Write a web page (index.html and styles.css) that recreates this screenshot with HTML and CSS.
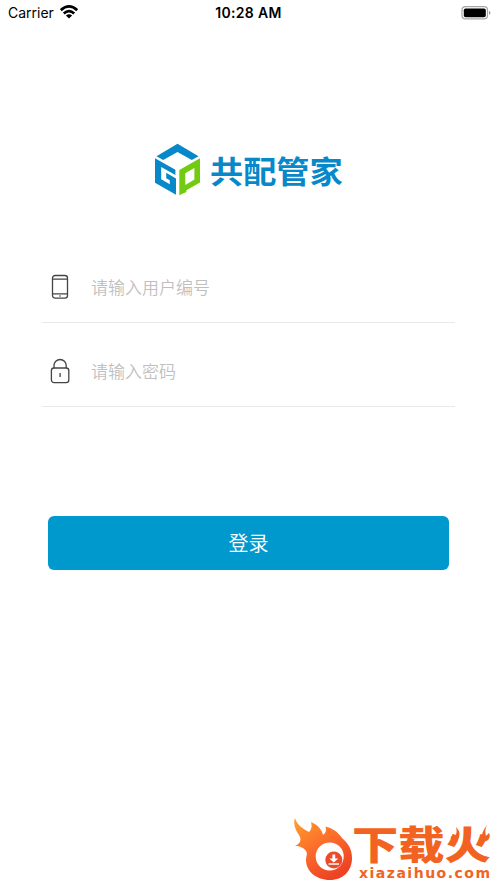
FILE: index.html
```html
<!DOCTYPE html>
<html lang="zh-CN">
<head>
<meta charset="utf-8">
<title>共配管家</title>
<link rel="stylesheet" href="styles.css">
</head>
<body>
<header class="status">
  <div class="carrier">
    <span>Carrier</span>
    <svg width="18" height="14" viewBox="0 0 18 14" fill="none" stroke="#000" stroke-width="2.7"><path d="M.8 5.2Q9-2.3 17.2 5.2M3.8 8.5Q9 3.9 14.2 8.5"/><path d="M5.9 10.6Q9 8 12.1 10.6L9 13.6Z" fill="#000" stroke="none"/></svg>
  </div>
  <time class="clock">10:28 AM</time>
  <div class="power">
    <svg width="30" height="14" viewBox="0 0 30 14"><rect x="1" y=".7" width="25.5" height="12.2" rx="3.4" fill="#fff" stroke="#a6a6a6" stroke-width="1.2"/><rect x="2.8" y="2.4" width="22" height="8.8" rx="1.8"/><path d="M28 4.7Q31 6.8 28 8.9Z" fill="#999"/></svg>
  </div>
</header>
<main class="login">
  <div class="brand">
    <svg class="cube" width="48" height="54" viewBox="0 0 48 54">
      <path d="M2.5 13.2 23.5 .8 44.5 13.2 37.8 17.1 23.5 8.9 9.2 17.1Z" fill="#0788c8"/>
      <path d="M1 15.3 21.4 26.8V32L7.2 24V36.2L15.8 41.2V37.3L12.2 35.2V29.8L22 35.4V51.8L1 39.7Z" fill="#0788c8"/>
      <path fill-rule="evenodd" d="M46 15.3V39.4L32.4 47.3V49.1L25.3 52.2V27.1ZM40.4 25 31.3 30.2V42L40.4 36.5Z" fill="#73cb11"/>
    </svg>
    <h1 class="name">共配管家</h1>
  </div>
  <form class="form">
    <label class="field">
      <svg width="20" height="26" viewBox="0 0 20 26" fill="none" stroke="#444" stroke-width="1.3"><rect x="2.5" y="1.5" width="15" height="22.6" rx="2.6"/><path d="M2.5 5.1H17.5M2.5 19.8H17.5"/><circle cx="10" cy="22" r=".8" fill="#444" stroke="none"/></svg>
      <input type="text" placeholder="请输入用户编号">
    </label>
    <label class="field">
      <svg width="20" height="26" viewBox="0 0 20 26" fill="none" stroke="#444" stroke-width="1.3"><rect x="1.4" y="10" width="17.4" height="14.6" rx="2.6"/><path d="M4 10V7.6A6.1 6.1 0 0 1 16.2 7.6V10M10.1 15V19"/></svg>
      <input type="password" placeholder="请输入密码">
    </label>
    <button class="submit" type="button">登录</button>
  </form>
</main>
<footer class="mark">
  <svg class="flame" width="60" height="64" viewBox="0 0 60 64">
    <defs><linearGradient id="fire" x1="0" y1="0" x2=".6" y2="1"><stop offset="0" stop-color="#ffa02c"/><stop offset=".55" stop-color="#fb692b"/><stop offset="1" stop-color="#ed4324"/></linearGradient></defs>
    <path d="M1 1C3 8 9 12 15 15C18 12 18 9 17 5C24 8 28 13 29 18C32 16 32.500 13 31.500 9.500C38 11 44 15 48 21C54 26 58 32 58 41C58 54 49 63 36 63C22 63 12 54 12 43C12 39 14 37 12 34C10 31 6 29 1 29C6 27 8 23 5 18C1 12 -1 7 1 1Z" fill="url(#fire)"/>
    <circle cx="35.700" cy="39.500" r="14" fill="#fff"/>
    <circle cx="39.800" cy="43" r="8.500" fill="#ec4b2b"/>
    <path d="M38.400 37.500H41.200V41.500H44.300L39.800 45.500L35.300 41.500H38.400ZM34.600 46.200H45V47.700H34.600Z" fill="#fff"/>
  </svg>
  <div class="words">
    <div class="title">下载火</div>
    <div class="domain">xiazaihuo.com</div>
    <svg class="sparks" width="44" height="22" viewBox="0 0 44 22"><path d="M7 2C13 8 10 12 8 17C4 19 1 15 2 11L5 13C8 9 8 6 7 2ZM38 0C34 5 32 10 33 15C37 19 43 13 40 8L37 11C36 7 36 4 38 0Z"/></svg>
  </div>
</footer>
</body>
</html>
```
FILE: styles.css
```css
* { box-sizing: border-box; }
body {
  margin: 0;
  height: 883px;
  display: flex;
  flex-direction: column;
  overflow: hidden;
  background: #fff;
  font-family: Inter, "Noto Sans CJK SC", sans-serif;
}
.status {
  height: 26px;
  padding: 0 6px 0 8px;
  display: grid;
  grid-template-columns: 1fr auto 1fr;
  align-items: center;
  font-size: 14px;
  line-height: 26px;
}
.carrier { display: flex; align-items: center; gap: 6px; }
.carrier svg { margin-top: -2px; }
.clock { font-size: 14px; font-weight: 600; letter-spacing: .35px; margin-left: -2px; }
.power { display: flex; justify-content: flex-end; }
.power svg { margin-top: -1px; }
.login { padding: 117px 42px 0; }
.brand { height: 54px; display: flex; align-items: center; padding-left: 112px; }
.cube { flex: none; }
.name {
  margin: 0 0 0 8px;
  font: 700 31px/52px "Noto Sans CJK SC", sans-serif;
  color: #0788c8;
  white-space: nowrap;
  transform: scaleX(1.07);
  transform-origin: 0 0;
  width: 124px;
}
.form { margin-top: 42px; }
.field {
  height: 84px;
  display: flex;
  align-items: center;
  gap: 21px;
  padding: 13px 0 0 8px;
  border-bottom: 1px solid #e9e9e9;
}
.field svg { flex: none; }
.field input {
  flex: 1;
  min-width: 0;
  height: 30px;
  padding: 0;
  border: 0;
  outline: 0;
  background: none;
  font: 350 17px/30px "Noto Sans CJK SC", sans-serif;
}
.field input::placeholder { color: #bfbfbf; opacity: 1; }
.submit {
  display: block;
  width: 401px;
  height: 54px;
  margin: 109px 0 0 6px;
  padding: 0;
  border: 0;
  border-radius: 6px;
  background: #0099ce;
  color: #fff;
  font: 350 20px/54px "Noto Sans CJK SC", sans-serif;
}
.mark { margin-top: auto; height: 66px; padding-left: 294px; display: flex; }
.flame { flex: none; }
.words { position: relative; width: 143px; color: #f26322; }
.title {
  width: 117px;
  height: 48px;
  font: 900 38.5px/50px "Noto Sans CJK SC", sans-serif;
  transform: scaleX(1.2);
  transform-origin: 0 0;
  margin: 0 0 0 -2px;
  white-space: nowrap;
}
.domain {
  margin-left: 5px;
  font: 700 14px/16px "DejaVu Sans", sans-serif;
  letter-spacing: 1.5px;
  white-space: nowrap;
}
.sparks { position: absolute; left: 95px; top: 8px; fill: #f26322; }
```
